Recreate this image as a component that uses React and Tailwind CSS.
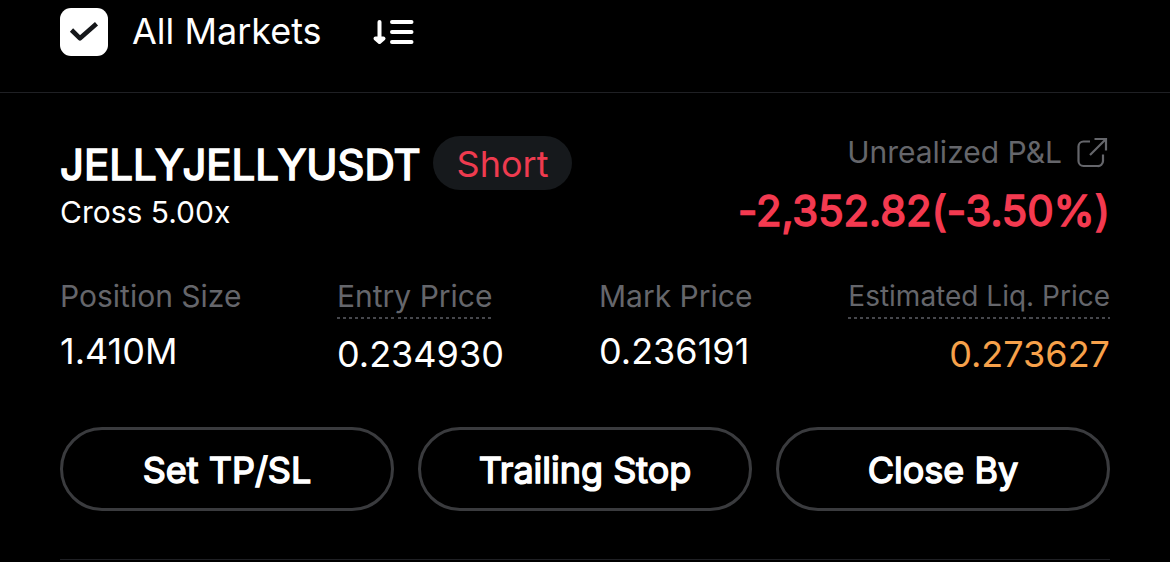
const stats = [
  { label: 'Position Size', value: '1.410M', labelClass: 'text-[30px]' },
  { label: 'Entry Price', value: '0.234930', labelClass: 'text-[30px]', hint: true },
  { label: 'Mark Price', value: '0.236191', labelClass: 'text-[30px]' },
  { label: 'Estimated Liq. Price', value: '0.273627', labelClass: 'text-[28px]', hint: true, warn: true },
];

const actions = ['Set TP/SL', 'Trailing Stop', 'Close By'];

function Header() {
  return (
    <header className="flex h-[93px] items-start border-b border-[#1f2024] pl-[60px] pt-2">
      <div className="flex size-12 items-center justify-center rounded-[11px] bg-white">
        <svg width="30" height="22" viewBox="0 0 30 22" fill="none" stroke="#15171a" strokeWidth="4.6" strokeLinejoin="round">
          <path d="M2.500 9L11 17.300L27.500 2.800" />
        </svg>
      </div>
      <span className="ml-6 w-[190px] text-[36px] leading-[46px]">All Markets</span>
      <svg className="ml-[50px] mt-[10px]" width="42" height="28" viewBox="0 0 42 28" fill="none" stroke="#fff" strokeWidth="4" strokeLinecap="round" strokeLinejoin="round">
        <path d="M7.5 4V22" />
        <path d="M3.500 20.500L7.5 24L11.500 20.500Z" fill="#fff" strokeWidth="4" />
        <path d="M20 4H39.5M20 14H39.5M20 24H39.5" />
      </svg>
    </header>
  );
}

function ShareIcon() {
  return (
    <svg width="32" height="32" viewBox="0 0 32 32" fill="none" stroke="#65666b" strokeWidth="2.2">
      <path d="M13 4.500H6.500A5 5 0 0 0 1.500 9.500V24A5 5 0 0 0 6.500 29H20.500A5 5 0 0 0 26 24V17.500" />
      <path d="M13 18L28.500 2.500M17.500 2H29V13.500" />
    </svg>
  );
}

function Stat({ label, value, labelClass, hint, warn }) {
  return (
    <div className={warn ? 'flex flex-col items-end' : 'flex flex-col items-start'}>
      <div className={`${labelClass} h-[36px] whitespace-nowrap leading-[36px] text-[#65666b]`}>{label}
        {hint && (
          <div className="mt-[3px] h-[2px] w-full bg-[repeating-linear-gradient(90deg,#46474c_0_3px,transparent_3px_6.05px)]"></div>
        )}
      </div>
      <div className={`${hint ? 'mt-[18px]' : 'mt-[15px]'} text-[36px] leading-[44px] ${warn ? 'text-[#f7a14a]' : 'text-white'}`}>{value}</div>
    </div>
  );
}

export default function App() {
  return (
    <div className="h-[562px] w-[1170px] overflow-hidden bg-black font-['Inter',sans-serif] text-white">
      <Header />
      <main className="mx-[60px] h-[467px] border-b border-[#1f2024] pt-[43px]">
        <div className="flex h-[142px] justify-between">
          <div>
            <div className="flex h-[54px] items-center">
              <h1 className="w-[373px] whitespace-nowrap pt-[3px] text-[42px] leading-[54px] [-webkit-text-stroke:1.7px_currentColor]">JELLYJELLYUSDT</h1>
              <span className="flex h-[54px] w-[139px] items-center justify-center rounded-full bg-[#16191c] pt-[2px] text-[36px] text-[#ee3b4f]">Short</span>
            </div>
            <div className="mt-1 text-[30px] leading-[36px]">Cross 5.00x</div>
          </div>
          <div className="flex flex-col items-end">
            <div className="flex h-8 items-center gap-[15px] text-[30px] leading-8 text-[#65666b]">
              <span>Unrealized P&amp;L</span>
              <div className="mr-px pt-px">
                <ShareIcon />
              </div>
            </div>
            <div className="mt-4 whitespace-nowrap text-[42px] leading-[54px] tracking-[-0.1px] text-[#f43a50] [-webkit-text-stroke:1.5px_currentColor]">-2,352.82(-3.50%)</div>
          </div>
        </div>
        <div className="grid h-[149px] grid-cols-[277px_262px_1fr_262px]">
          {stats.map((s) => (
            <Stat key={s.label} {...s} />
          ))}
        </div>
        <div className="grid grid-cols-3 gap-6">
          {actions.map((a) => (
            <button key={a} className="h-[84px] rounded-full border-3 border-[#3a3b3e] pt-[2px] text-[36px] leading-[44px] [-webkit-text-stroke:1.5px_currentColor]">
              {a}
            </button>
          ))}
        </div>
      </main>
    </div>
  );
}
